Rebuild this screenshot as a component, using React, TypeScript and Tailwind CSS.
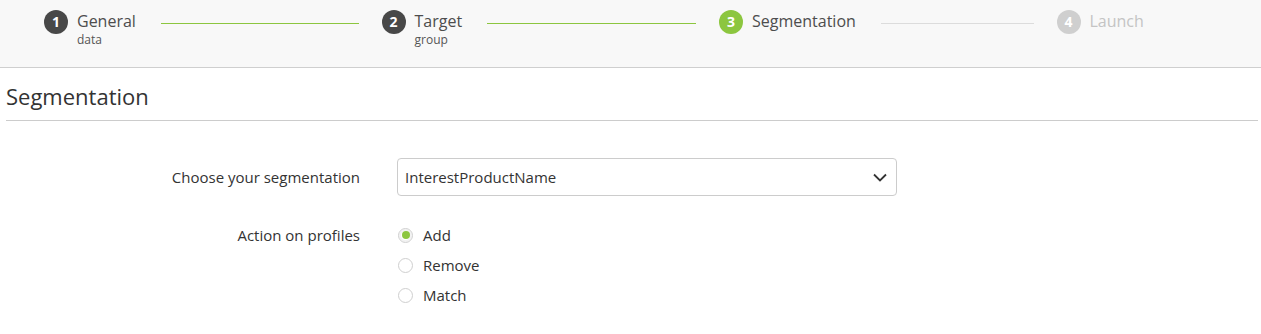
import React from "react";

const font = { fontFamily: '"Open Sans", "Liberation Sans", sans-serif' };

type Step = { n: number; title: string; sub?: string; state: "done" | "active" | "todo"; line?: "green" | "grey" };

const steps: Step[] = [
  { n: 1, title: "General", sub: "data", state: "done", line: "green" },
  { n: 2, title: "Target", sub: "group", state: "done", line: "green" },
  { n: 3, title: "Segmentation", state: "active", line: "grey" },
  { n: 4, title: "Launch", state: "todo" },
];

function StepItem({ s }: { s: Step }) {
  const circle =
    s.state === "done"
      ? "bg-[#484848] text-white"
      : s.state === "active"
      ? "bg-[#8cc63f] text-white"
      : "bg-[#cfcfcf] text-white";
  const titleColor = s.state === "todo" ? "text-[#c4c4c4]" : "text-[#4d4d4d]";
  return (
    <div className={`flex items-start shrink-0 ${s.line ? "w-[337.5px] pr-[23px]" : ""}`}>
      <div className={`w-6 h-6 rounded-full flex items-center justify-center text-[14px] font-bold leading-none ${circle}`}>
        {s.n}
      </div>
      <div className="ml-[9px] mt-[1px] flex flex-col">
        <span className={`text-[16px] leading-[20px] ${titleColor}`}>{s.title}</span>
        {s.sub && <span className="text-[12px] leading-[18px] text-[#555]">{s.sub}</span>}
      </div>
      {s.line && (
        <div
          className={`flex-1 ml-[25px] mt-[13px] h-px ${s.line === "green" ? "bg-[#8cc63f]" : "bg-[#dcdcdc]"}`}
        />
      )}
    </div>
  );
}

function Radio({ label, checked }: { label: string; checked?: boolean }) {
  return (
    <div className="flex items-center h-[30px]">
      <span
        className={`w-[15px] h-[15px] rounded-full border border-[#cfcfcf] bg-white flex items-center justify-center ${
          checked ? "shadow-[inset_0_0_0_2px_#f2f2f2]" : ""
        }`}
      >
        {checked && <span className="w-[8px] h-[8px] rounded-full bg-[#8cc63f]" />}
      </span>
      <span className="ml-[10px] text-[15px] leading-[30px] text-[#333]">{label}</span>
    </div>
  );
}

export default function App() {
  return (
    <div className="w-[1261px] h-[334px] bg-white overflow-hidden" style={font}>
      <div className="h-[68px] bg-[#f8f8f8] border-b border-[#cfcfcf] pl-[44px] pt-[10px] flex items-start">
        {steps.map((s) => (
          <StepItem key={s.n} s={s} />
        ))}
      </div>
      <div className="ml-[6px] mr-[3px] mt-[13px] pb-[9px] border-b border-[#cccccc]">
        <h1 className="text-[22px] leading-[30px] text-[#333] font-normal">Segmentation</h1>
      </div>
      <div className="mt-[37px]">
        <div className="flex items-center">
          <div className="w-[360px] text-right text-[15px] text-[#333] leading-[20px]">Choose your segmentation</div>
          <div className="ml-[37px] w-[500px] h-[38px] border border-[#cccccc] rounded-[4px] flex items-center justify-between pl-[7px] pr-[9px] bg-white">
            <span className="text-[15px] text-[#333]">InterestProductName</span>
            <svg width="14" height="9" viewBox="0 0 14 9" fill="none">
              <path d="M1 1.5 L7 7.5 L13 1.5" stroke="#333" strokeWidth="1.8" />
            </svg>
          </div>
        </div>
        <div className="flex items-start mt-[24px]">
          <div className="w-[360px] text-right text-[15px] text-[#333] leading-[30px]">Action on profiles</div>
          <div className="ml-[38px] flex flex-col">
            <Radio label="Add" checked />
            <Radio label="Remove" />
            <Radio label="Match" />
          </div>
        </div>
      </div>
    </div>
  );
}
